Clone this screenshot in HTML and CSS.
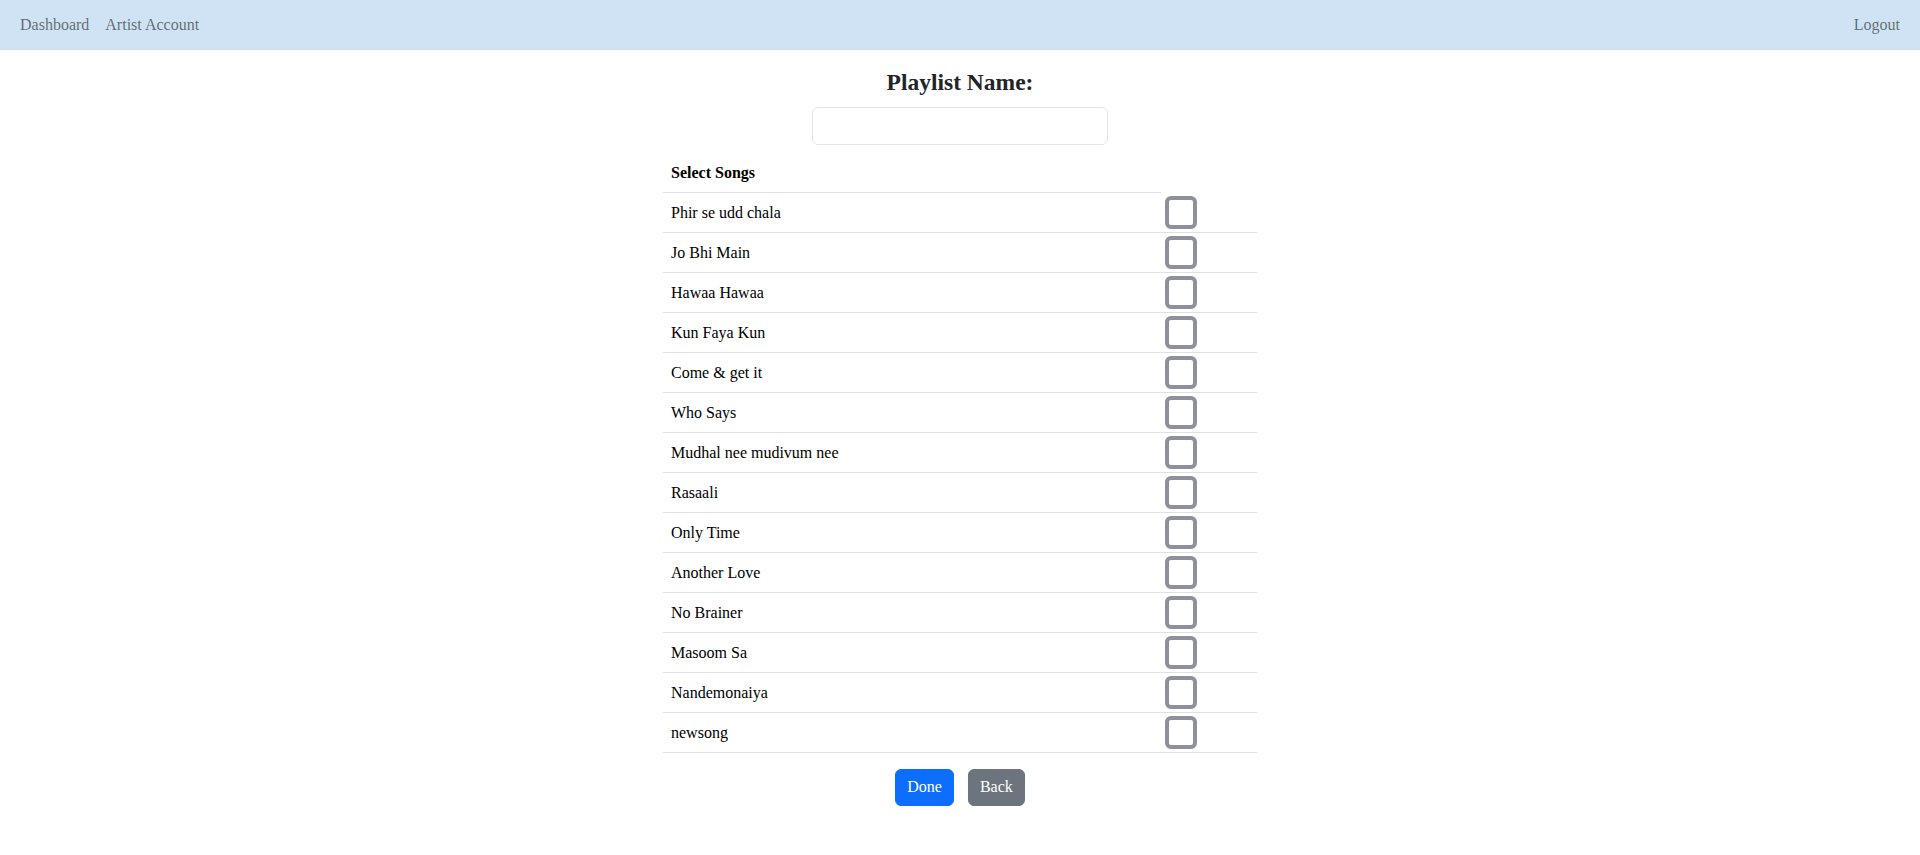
FILE: index.html
```html
<!DOCTYPE html>
<html>
<head>
<meta charset="utf-8">
<title>Create Playlist</title>
<link rel="stylesheet" href="styles.css">
</head>
<body>
<nav class="navbar">
  <div class="nav-left">
    <a class="nav-link" href="#">Dashboard</a>
    <a class="nav-link" href="#">Artist Account</a>
  </div>
  <div class="nav-right">
    <a class="nav-link" href="#">Logout</a>
  </div>
</nav>
<main class="content">
  <h4 class="title">Playlist Name:</h4>
  <input class="name-input" type="text">
  <table class="songs">
    <thead>
      <tr><th class="head-cell">Select Songs</th></tr>
    </thead>
    <tbody>
      <tr><td class="song">Phir se udd chala</td><td class="check-cell"><input type="checkbox" class="check"></td></tr>
      <tr><td class="song">Jo Bhi Main</td><td class="check-cell"><input type="checkbox" class="check"></td></tr>
      <tr><td class="song">Hawaa Hawaa</td><td class="check-cell"><input type="checkbox" class="check"></td></tr>
      <tr><td class="song">Kun Faya Kun</td><td class="check-cell"><input type="checkbox" class="check"></td></tr>
      <tr><td class="song">Come &amp; get it</td><td class="check-cell"><input type="checkbox" class="check"></td></tr>
      <tr><td class="song">Who Says</td><td class="check-cell"><input type="checkbox" class="check"></td></tr>
      <tr><td class="song">Mudhal nee mudivum nee</td><td class="check-cell"><input type="checkbox" class="check"></td></tr>
      <tr><td class="song">Rasaali</td><td class="check-cell"><input type="checkbox" class="check"></td></tr>
      <tr><td class="song">Only Time</td><td class="check-cell"><input type="checkbox" class="check"></td></tr>
      <tr><td class="song">Another Love</td><td class="check-cell"><input type="checkbox" class="check"></td></tr>
      <tr><td class="song">No Brainer</td><td class="check-cell"><input type="checkbox" class="check"></td></tr>
      <tr><td class="song">Masoom Sa</td><td class="check-cell"><input type="checkbox" class="check"></td></tr>
      <tr><td class="song">Nandemonaiya</td><td class="check-cell"><input type="checkbox" class="check"></td></tr>
      <tr><td class="song">newsong</td><td class="check-cell"><input type="checkbox" class="check"></td></tr>
    </tbody>
  </table>
  <div class="actions">
    <button class="btn btn-primary">Done</button>
    <button class="btn btn-secondary">Back</button>
  </div>
</main>
</body>
</html>
```

FILE: styles.css
```css
* { box-sizing: border-box; }
html, body {
  margin: 0;
  padding: 0;
  background: #fff;
  font-family: "Liberation Serif", "Times New Roman", serif;
  font-size: 16px;
  color: #212529;
}
.navbar {
  height: 50px;
  background: #cfe3f4;
  display: flex;
  align-items: center;
  justify-content: space-between;
  padding: 0 12px;
}
.nav-left, .nav-right {
  display: flex;
  align-items: center;
}
.nav-link {
  color: rgba(0, 0, 0, 0.55);
  text-decoration: none;
  padding: 0 8px;
  line-height: 24px;
}
.content {
  display: flex;
  flex-direction: column;
  align-items: center;
}
.title {
  margin: 18px 0 10px;
  font-size: 23.5px;
  line-height: 28.8px;
  font-weight: bold;
}
.name-input {
  width: 296px;
  height: 38px;
  border: 1px solid #e3e6e9;
  border-radius: 6px;
  background: #fff;
  margin: 0;
  font: inherit;
}
.songs {
  width: 594px;
  margin-top: 8px;
  border-collapse: collapse;
  color: #000;
}
.head-cell {
  text-align: left;
  font-weight: bold;
  padding: 8px 8px;
  line-height: 23px;
  border-bottom: 1px solid #dee2e6;
}
.song {
  width: 498px;
  padding: 8px 8px;
  line-height: 23px;
  border-bottom: 1px solid #dee2e6;
}
.check-cell {
  padding: 0 4px;
  height: 40px;
  border-bottom: 1px solid #dee2e6;
  vertical-align: middle;
}
.check {
  appearance: none;
  -webkit-appearance: none;
  display: block;
  width: 32px;
  height: 33px;
  margin: 0;
  border: 4px solid #8f8f9d;
  border-radius: 6px;
  background: #fff;
}
.actions {
  display: flex;
  gap: 14px;
  margin-top: 16px;
}
.btn {
  font: inherit;
  font-size: 16px;
  line-height: 24px;
  padding: 5px 11px;
  height: 37px;
  border: 1px solid transparent;
  border-radius: 6px;
  color: #fff;
}
.btn-primary {
  background: #0d6efd;
  border-color: #0d6efd;
}
.btn-secondary {
  background: #6c757d;
  border-color: #6c757d;
}
```
